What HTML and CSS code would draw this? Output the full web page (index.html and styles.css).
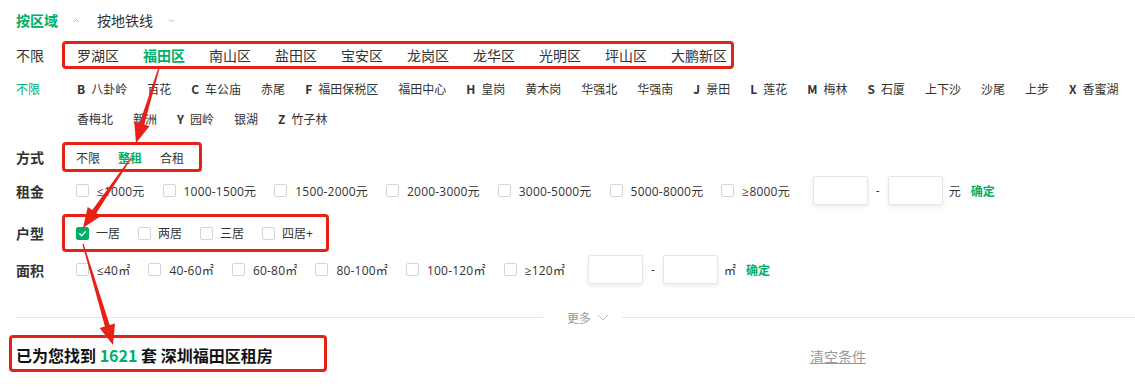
FILE: index.html
```html
<!DOCTYPE html>
<html lang="zh-CN">
<head>
  <meta charset="UTF-8">
  <title>深圳租房 - 筛选</title>
  <link rel="stylesheet" href="styles.css">
</head>
<body>
  <div class="filter">
    <div class="tabs">
      <span class="tab active">按区域</span>
      <svg class="caret" viewBox="0 0 7 5"><path d="M1 4 L3.5 1.5 L6 4" /></svg>
      <span class="tab">按地铁线</span>
      <svg class="caret" viewBox="0 0 7 5"><path d="M1 1.5 L3.5 4 L6 1.5" /></svg>
    </div>

    <div class="row row-district">
      <span class="label">不限</span>
      <ul class="group mark district">
        <li>罗湖区</li>
        <li class="on">福田区</li>
        <li>南山区</li>
        <li>盐田区</li>
        <li>宝安区</li>
        <li>龙岗区</li>
        <li>龙华区</li>
        <li>光明区</li>
        <li>坪山区</li>
        <li>大鹏新区</li>
      </ul>
    </div>

    <div class="row row-sub">
      <span class="label green">不限</span>
      <ul class="group sub">
        <li><b>B</b>八卦岭</li>
        <li>百花</li>
        <li><b>C</b>车公庙</li>
        <li>赤尾</li>
        <li><b>F</b>福田保税区</li>
        <li>福田中心</li>
        <li><b>H</b>皇岗</li>
        <li>黄木岗</li>
        <li>华强北</li>
        <li>华强南</li>
        <li><b>J</b>景田</li>
        <li><b>L</b>莲花</li>
        <li><b>M</b>梅林</li>
        <li><b>S</b>石厦</li>
        <li>上下沙</li>
        <li>沙尾</li>
        <li>上步</li>
        <li><b>X</b>香蜜湖</li>
        <li>香梅北</li>
        <li>新洲</li>
        <li><b>Y</b>园岭</li>
        <li>银湖</li>
        <li><b>Z</b>竹子林</li>
      </ul>
    </div>

    <div class="row row-way">
      <span class="label strong">方式</span>
      <ul class="group mark way">
        <li>不限</li>
        <li class="on">整租</li>
        <li>合租</li>
      </ul>
    </div>

    <div class="row row-rent">
      <span class="label strong">租金</span>
      <div class="group checks">
        <label class="check"><i class="box"></i>≤1000元</label>
        <label class="check"><i class="box"></i>1000-1500元</label>
        <label class="check"><i class="box"></i>1500-2000元</label>
        <label class="check"><i class="box"></i>2000-3000元</label>
        <label class="check"><i class="box"></i>3000-5000元</label>
        <label class="check"><i class="box"></i>5000-8000元</label>
        <label class="check"><i class="box"></i>≥8000元</label>
        <div class="range">
          <input class="range-input" type="text">
          <span class="dash">-</span>
          <input class="range-input" type="text">
          <span class="unit">元</span>
          <a class="ok">确定</a>
        </div>
      </div>
    </div>

    <div class="row row-layout">
      <span class="label strong">户型</span>
      <div class="group mark checks layout">
        <label class="check"><i class="box checked"><svg viewBox="0 0 13 13"><path d="M3.4 6.6 L5.7 8.8 L9.6 4.4" /></svg></i>一居</label>
        <label class="check"><i class="box"></i>两居</label>
        <label class="check"><i class="box"></i>三居</label>
        <label class="check"><i class="box"></i>四居+</label>
      </div>
    </div>

    <div class="row row-area">
      <span class="label strong">面积</span>
      <div class="group checks">
        <label class="check"><i class="box"></i>≤40㎡</label>
        <label class="check"><i class="box"></i>40-60㎡</label>
        <label class="check"><i class="box"></i>60-80㎡</label>
        <label class="check"><i class="box"></i>80-100㎡</label>
        <label class="check"><i class="box"></i>100-120㎡</label>
        <label class="check"><i class="box"></i>≥120㎡</label>
        <div class="range">
          <input class="range-input" type="text">
          <span class="dash">-</span>
          <input class="range-input" type="text">
          <span class="unit">㎡</span>
          <a class="ok">确定</a>
        </div>
      </div>
    </div>

    <div class="more">
      <span class="line left"></span>
      <span class="more-text">更多
        <svg class="chev" viewBox="0 0 12 7"><path d="M1 1 L6 6 L11 1" /></svg>
      </span>
      <span class="line"></span>
    </div>

    <div class="result">
      <div class="result-box">已为您找到&nbsp;<span class="num">1621</span>&nbsp;套 深圳福田区租房</div>
      <a class="clear">清空条件</a>
    </div>

    <!-- 标注箭头 -->
    <svg class="arrows" viewBox="0 0 1135 387">
      <polygon points="158.4,67.8 139.5,123.2 134.2,121.5 136,143 149.5,126.2 144.3,124.6 159.6,68.2" />
      <polygon points="130.5,157.7 92.3,210.1 87.7,207 83,228 100.9,216 96.4,212.9 131.5,158.3" />
      <polygon points="82.4,244.2 104.9,326.5 99.6,328.1 113,345 115,323.6 109.7,325.1 83.6,243.8" />
    </svg>
  </div>
</body>
</html>
```

FILE: styles.css
```css
html, body {
  margin: 0;
  padding: 0;
  background: #fff;
}
body {
  font-family: "Noto Sans CJK SC", "Microsoft YaHei", sans-serif;
  color: #333;
}
.filter {
  position: relative;
  width: 1135px;
  height: 387px;
  padding: 8px 0 0 16px;
  box-sizing: border-box;
  overflow: hidden;
}

/* 顶部切换 */
.tabs {
  display: flex;
  align-items: center;
  height: 24px;
  font-size: 14px;
}
.tab.active {
  color: #00ae66;
  font-weight: bold;
}
.caret {
  width: 7px;
  height: 5px;
  margin: 0 17px 0 15px;
  fill: none;
  stroke: #bbb;
  stroke-width: 1;
}

/* 通用行 */
.row {
  display: flex;
  align-items: center;
}
.label {
  flex: 0 0 46px;
  font-size: 14px;
}
.label.strong {
  font-weight: bold;
}
.label.green {
  color: #00ae66;
  font-size: 12px;
  line-height: 30px;
}
.group {
  display: flex;
  align-items: center;
  list-style: none;
  margin: 0;
  padding: 0 0 0 15px;
  box-sizing: border-box;
}
.group li.on {
  color: #00ae66;
  font-weight: bold;
}
.mark {
  border: 3px solid #e62117;
  border-radius: 4px;
}

.row-district {
  margin-top: 9px;
}
.district {
  height: 28px;
  gap: 24px;
  padding: 0 4px 0 12px;
  font-size: 14px;
}

.row-sub {
  margin-top: 5px;
  align-items: flex-start;
}
.sub {
  flex: 1;
  flex-wrap: wrap;
  column-gap: 20px;
  line-height: 30px;
  font-size: 12px;
}
.sub b {
  margin-right: 6px;
}

.row-way {
  margin-top: 8px;
}
.way {
  height: 30px;
  gap: 18px;
  padding: 0 15px 0 11px;
  font-size: 12px;
}

/* 复选 */
.checks {
  font-family: "Open Sans", "Noto Sans CJK SC", sans-serif;
  font-size: 12px;
  padding-left: 14px;
}
.check {
  display: flex;
  align-items: center;
  gap: 8px;
  margin-right: 18px;
  letter-spacing: 0.2px;
}
.box {
  display: block;
  width: 13px;
  height: 13px;
  border: 1px solid #d5d5d5;
  border-radius: 2px;
  box-sizing: border-box;
  background: #fff;
}
.box.checked {
  background: #00ae66;
  border-color: #00ae66;
  position: relative;
}
.box.checked svg {
  position: absolute;
  left: -1px;
  top: -1px;
  width: 13px;
  height: 13px;
  fill: none;
  stroke: #fff;
  stroke-width: 1.4;
}

.row-rent {
  margin-top: 4px;
  height: 29px;
}
.row-layout {
  margin-top: 9px;
}
.layout {
  height: 38px;
  padding: 0 0 0 11px;
}
.layout .check {
  gap: 7px;
  letter-spacing: 0;
}
.layout .check:last-child {
  margin-right: 13px;
}
.row-area {
  margin-top: 3px;
  height: 29px;
}

.range {
  display: flex;
  align-items: center;
  margin-left: 5px;
}
.range-input {
  width: 55px;
  height: 29px;
  border: 1px solid #e6e6e6;
  border-radius: 2px;
  box-sizing: border-box;
  box-shadow: 0 2px 4px rgba(0, 0, 0, 0.08);
  outline: none;
}
.dash {
  margin: 0 8px;
}
.unit {
  margin-left: 6px;
}
.ok {
  margin-left: 10px;
  color: #00ae66;
  font-weight: bold;
}

/* 更多 */
.more {
  display: flex;
  align-items: center;
  height: 20px;
  margin-top: 23px;
  margin-left: -1px;
}
.line {
  flex: 1;
  height: 1px;
  background: #e6e6e6;
}
.line.left {
  flex: 0 0 528px;
}
.more-text {
  display: flex;
  align-items: center;
  gap: 6px;
  padding: 0 13px 0 24px;
  font-size: 12px;
  color: #999;
}
.chev {
  width: 12px;
  height: 7px;
  fill: none;
  stroke: #bbb;
  stroke-width: 1;
}

/* 结果 */
.result {
  display: flex;
  align-items: center;
  margin-top: 8px;
}
.result-box {
  display: flex;
  align-items: center;
  width: 318px;
  height: 37px;
  margin-left: -7px;
  padding: 3px 0 0 4px;
  box-sizing: border-box;
  border: 3px solid #e62117;
  border-radius: 4px;
  font-size: 16px;
  font-weight: bold;
  color: #111;
}
.num {
  color: #00ae66;
}
.clear {
  margin-left: 483px;
  padding-top: 4px;
  font-size: 14px;
  color: #999;
  text-decoration: underline;
}

.arrows {
  position: absolute;
  left: 0;
  top: 0;
  width: 1135px;
  height: 387px;
  pointer-events: none;
  fill: #e62117;
}
```
